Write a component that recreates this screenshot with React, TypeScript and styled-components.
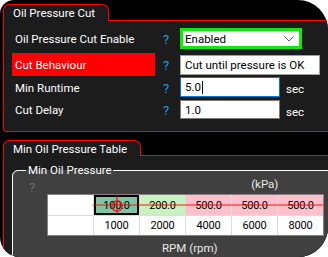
import React from 'react';
import styled, { createGlobalStyle } from 'styled-components';

const Global = createGlobalStyle`
  html, body { margin: 0; padding: 0; background: #ffffff; }
  body { font-family: Roboto, "Liberation Sans", sans-serif; }
  * { box-sizing: border-box; }
`;

const Frame = styled.div`
  width: 328px;
  height: 257px;
  background: #000;
  overflow: hidden;
  border-radius: 14px 30px 30px 20px;
  padding: 4px 0 0 3px;
  display: flex;
  flex-direction: column;
  font-size: 11.5px;
  color: #fff;
`;

const TabStrip = styled.div<{ $h: number }>`
  display: flex;
  height: ${(p) => p.$h}px;
  flex: none;
`;

const Tab = styled.div<{ $w: number }>`
  width: ${(p) => p.$w}px;
  border: 1px solid #ff0000;
  border-bottom: none;
  border-radius: 6px 7px 0 0;
  background: #1c1c1c;
  padding-left: 9px;
  padding-top: 1px;
  line-height: 14px;
  white-space: nowrap;
`;

const TabLine = styled.div`
  flex: 1;
  border-bottom: 1px solid #ff0000;
  margin-right: -10px;
`;

const Panel = styled.div`
  width: 340px;
  height: 111px;
  flex: none;
  border: 1px solid #ff0000;
  border-top: none;
  border-radius: 0 0 4px 4px;
  background: #1c1c1c;
  padding: 6px 0 0 8px;
  display: flex;
  flex-direction: column;
`;

const Gap = styled.div`
  height: 8px;
  flex: none;
`;

const Panel2 = styled.div`
  width: 340px;
  flex: 1;
  border: 1px solid #ff0000;
  border-top: none;
  border-radius: 0 0 0 18px;
  background: #1c1c1c;
  padding: 7px 0 0 8px;
  margin-bottom: -20px;
`;

const Row = styled.div<{ $h: number; $mt: number }>`
  display: flex;
  align-items: center;
  height: ${(p) => p.$h}px;
  margin-top: ${(p) => p.$mt}px;
`;

const Label = styled.div<{ $active?: boolean }>`
  width: 143px;
  height: 100%;
  display: flex;
  align-items: center;
  padding-left: 3px;
  padding-top: 1px;
  background: ${(p) => (p.$active ? '#ff0000' : 'transparent')};
  white-space: nowrap;
`;

const Help = styled.div`
  width: 25px;
  padding-left: 8px;
  padding-top: 2px;
  color: #1a9de0;
  font-size: 13px;
`;

const Select = styled.div`
  width: 122px;
  height: 21px;
  border: 3px solid #14e614;
  background: #fff;
  color: #000;
  display: flex;
  align-items: center;
  padding: 0 5px 0 2px;
  justify-content: space-between;
`;

const Combo = styled.div`
  width: 140px;
  height: 20px;
  border: 1px solid #a0a0a0;
  background: #fff;
  color: #000;
  display: flex;
  align-items: center;
  padding-left: 4px;
  white-space: nowrap;
`;

const TextBox = styled.div<{ $focus?: boolean }>`
  width: 100px;
  height: ${(p) => (p.$focus ? 20 : 19)}px;
  border: 1px solid ${(p) => (p.$focus ? '#0078d7' : '#7a7a7a')};
  background: #fff;
  color: #000;
  display: flex;
  align-items: center;
  padding-left: 4px;
`;

const Caret = styled.span`
  display: inline-block;
  width: 1px;
  height: 13px;
  background: #000;
  margin-left: 1px;
`;

const Unit = styled.div`
  margin-left: 6px;
  margin-top: 4px;
`;

const Group = styled.fieldset`
  margin: 0;
  padding: 0;
  width: 330px;
  height: 120px;
  border: 1px solid #ffffff;
  border-radius: 6px;
  background: #404040;
`;

const Legend = styled.legend`
  margin-left: 13px;
  padding: 0 1px 0 2px;
  line-height: 14px;
`;

const GroupHead = styled.div`
  display: flex;
  height: 17px;
  align-items: flex-end;
`;

const GrayHelp = styled.div`
  margin-left: 16px;
  color: #6a6a6a;
  font-size: 13px;
  line-height: 13px;
`;

const UnitLabel = styled.div`
  margin-left: 216px;
  margin-bottom: 3px;
  color: #e8e8e8;
`;

const TableWrap = styled.div`
  margin-left: 34px;
  width: 277px;
  border: 1px solid #828282;
  background: #fff;
  position: relative;
  display: grid;
  grid-template-columns: 45px repeat(5, 46px);
  grid-template-rows: 20px 20px;
  color: #000;
  font-size: 11px;
  letter-spacing: -0.2px;
`;

const Cell = styled.div<{ $bg?: string; $sel?: boolean; $first?: boolean; $bottom?: boolean }>`
  background: ${(p) => p.$bg || '#fff'};
  border-left: ${(p) => (p.$first ? 'none' : '1px solid #dcdcdc')};
  border-top: ${(p) => (p.$bottom ? '1px solid #dcdcdc' : 'none')};
  display: flex;
  align-items: center;
  justify-content: center;
  box-shadow: ${(p) => (p.$sel ? 'inset 0 0 0 2px #000' : 'none')};
`;

const HLine = styled.div`
  position: absolute;
  left: 45px;
  right: 0;
  top: 9px;
  height: 2px;
  background: rgba(255, 0, 0, 0.45);
`;

const Cross = styled.svg`
  position: absolute;
  left: 58px;
  top: 0;
`;

const AxisLabel = styled.div`
  margin-left: 149px;
  margin-top: 5px;
  color: #e8e8e8;
`;

const Chevron = () => (
  <svg width="10" height="6" viewBox="0 0 10 6">
    <path d="M0.5 0.5 L5 5 L9.5 0.5" fill="none" stroke="#606060" strokeWidth="1" />
  </svg>
);

const rpm = ['1000', '2000', '4000', '6000', '8000'];
const vals = ['100.0', '200.0', '500.0', '500.0', '500.0'];
const bgs = ['#7fc5a3', '#c9f2c0', '#ffc0cb', '#ffc0cb', '#ffc0cb'];

export default function App() {
  return (
    <>
      <Global />
      <Frame>
        <TabStrip $h={17}>
          <Tab $w={106}>Oil Pressure Cut</Tab>
          <TabLine />
        </TabStrip>
        <Panel>
          <Row $h={23} $mt={0}>
            <Label>Oil Pressure Cut Enable</Label>
            <Help>?</Help>
            <Select>
              <span>Enabled</span>
              <Chevron />
            </Select>
          </Row>
          <Row $h={23} $mt={3}>
            <Label $active>Cut Behaviour</Label>
            <Help>?</Help>
            <Combo>Cut until pressure is OK</Combo>
          </Row>
          <Row $h={22} $mt={0}>
            <Label>Min Runtime</Label>
            <Help>?</Help>
            <TextBox $focus>
              5.0<Caret />
            </TextBox>
            <Unit>sec</Unit>
          </Row>
          <Row $h={21} $mt={1}>
            <Label>Cut Delay</Label>
            <Help>?</Help>
            <TextBox>1.0</TextBox>
            <Unit>sec</Unit>
          </Row>
        </Panel>
        <Gap />
        <TabStrip $h={16}>
          <Tab $w={138}>Min Oil Pressure Table</Tab>
          <TabLine />
        </TabStrip>
        <Panel2>
          <Group>
            <Legend>Min Oil Pressure</Legend>
            <GroupHead>
              <GrayHelp>?</GrayHelp>
              <UnitLabel>(kPa)</UnitLabel>
            </GroupHead>
            <TableWrap>
              <Cell $first />
              {vals.map((v, i) => (
                <Cell key={'v' + i} $bg={bgs[i]} $sel={i === 0}>
                  {v}
                </Cell>
              ))}
              <Cell $first $bottom />
              {rpm.map((r) => (
                <Cell key={r} $bottom>
                  {r}
                </Cell>
              ))}
              <HLine />
              <Cross width="22" height="20" viewBox="0 0 22 20">
                <line x1="11" y1="1" x2="11" y2="19" stroke="rgba(255,0,0,0.55)" strokeWidth="2" />
                <circle cx="11" cy="11" r="5.2" fill="none" stroke="rgba(225,20,20,0.75)" strokeWidth="1.8" />
              </Cross>
            </TableWrap>
            <AxisLabel>RPM (rpm)</AxisLabel>
          </Group>
        </Panel2>
      </Frame>
    </>
  );
}
